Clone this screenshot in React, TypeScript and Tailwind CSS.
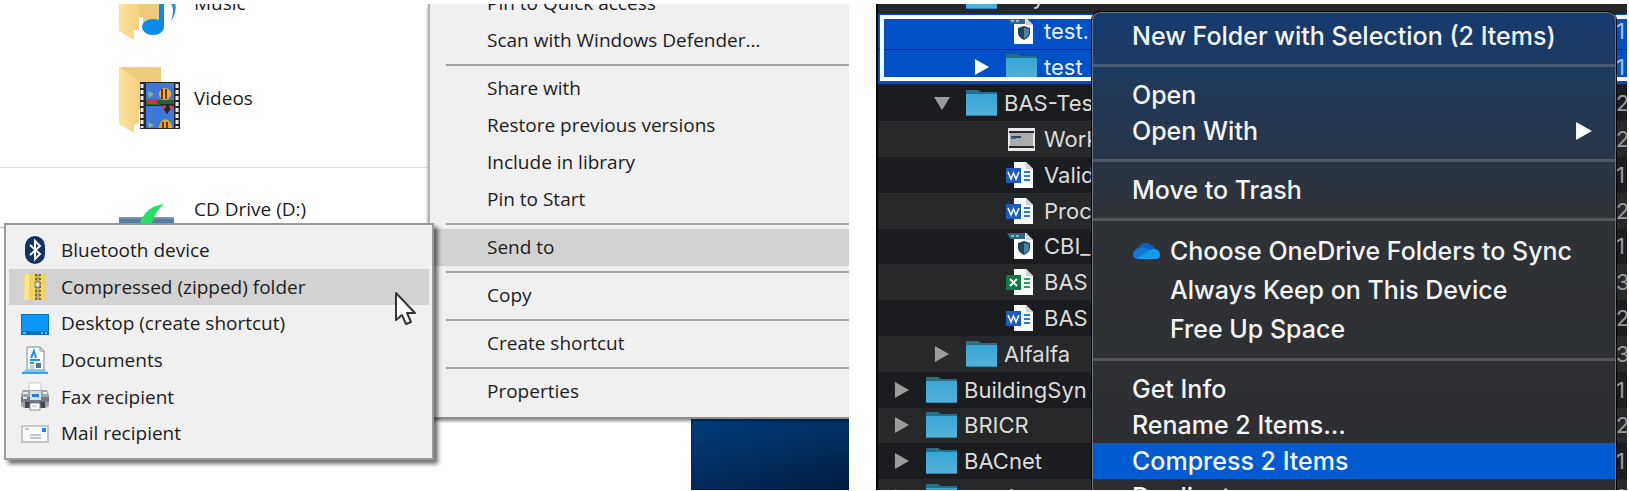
import type { ReactNode } from "react";

type IconProps = { className?: string };

const YellowFolder = ({ children }: { children: ReactNode }) => (
  <svg viewBox="0 0 64 68" className="h-[68px] w-16 shrink-0" aria-hidden="true">
    <defs>
      <linearGradient id="flap" x1="0" x2="1">
        <stop offset="0" stopColor="#fbe3a0" />
        <stop offset="1" stopColor="#f6d27e" />
      </linearGradient>
    </defs>
    <path d="M1 1h42v58H14z" fill="#eecb7c" />
    <path d="M15 60V44h10v18z" fill="#fff" />
    <path d="M1 1l20 14v42l-5 2v8L1 58z" fill="url(#flap)" />
    {children}
  </svg>
);

const MusicFolder = () => (
  <YellowFolder>
    <path d="M16 57h9v-3h20v8H16z" fill="#fff" />
    <ellipse cx="35" cy="54" rx="11" ry="8" fill="#0c8ce9" />
    <path d="M41 10h5v44h-5z" fill="#0c8ce9" />
    <path d="M52 20q11 14 1 28q5-13-3-22z" fill="#2d8fd6" />
  </YellowFolder>
);

const VideoFolder = () => (
  <YellowFolder>
    <path d="M22 16h40v47H22z" fill="#26282c" />
    <path d="M28 17h28v22H28zM28 40h28v22H28z" fill="#3f78d6" />
    <path d="M28 34h28v5H28z" fill="#20672f" />
    <path d="M24 18v44M59 18v44" stroke="#e8e8e8" strokeWidth="3" strokeDasharray="4 2" />
    <path d="M29 33h10v5H29z" fill="#d2344a" />
    <path d="M30 25l6 3-5 4z" fill="#8fb487" />
    <circle cx="47" cy="28" r="6" fill="#f0b51e" />
    <path d="M44 23v10M48 23v10" stroke="#76301c" strokeWidth="2" />
    <path d="M42 38l7 10 7-10z" fill="#25242f" />
    <circle cx="46" cy="41" r="2" fill="#d23b3b" />
    <circle cx="53" cy="41" r="2" fill="#d23b3b" />
    <path d="M41 62a6 8 0 0 1 13 0z" fill="#e8a81c" />
    <path d="M45 56v6M49 56v6" stroke="#76301c" strokeWidth="2" />
    <path d="M30 56l6 3-5 3z" fill="#8fb487" />
  </YellowFolder>
);

const CdDrive = () => (
  <svg viewBox="0 0 64 24" className="h-6 w-16 shrink-0" aria-hidden="true">
    <path d="M1 15h55v9H1z" fill="#5480a8" />
    <path d="M1 14h55v2H1z" fill="#7f95a5" />
    <path d="M21 24Q25 4 46 1q-7 6-11 15l-2 8z" fill="#25e06a" />
  </svg>
);

const BluetoothIcon = () => (
  <svg viewBox="0 0 28 28" className="size-7" aria-hidden="true">
    <rect x="4" y="0" width="20" height="28" rx="10" fill="#12315f" />
    <path d="M9 9l10 9-5 5V5l5 5-10 9" fill="none" stroke="#fff" strokeWidth="2" />
  </svg>
);

const ZipIcon = () => (
  <svg viewBox="0 0 28 28" className="size-7" aria-hidden="true">
    <path d="M4 1h21v23l1 3H3V3z" fill="#f5d35f" />
    <path d="M4 1h4v26H3z" fill="#fbe58f" />
    <path d="M14 1h5v26h-5z" fill="#c6ac55" />
    <path d="M15 1v26M19 1v26" stroke="#6d6a60" strokeWidth="2" strokeDasharray="2 2" />
    <path d="M14 9h5v5h-5z" fill="#e2e2e2" stroke="#77746a" />
  </svg>
);

const DesktopIcon = () => (
  <svg viewBox="0 0 28 28" className="size-7" aria-hidden="true">
    <path d="M0 4h28v21H0z" fill="#0a6fc0" />
    <path d="M1 5h26v16H1z" fill="#0c96f5" />
    <path d="M2 23h3M20 23h2M24 23h2" stroke="#dff1ff" strokeWidth="1" />
  </svg>
);

const DocumentsIcon = () => (
  <svg viewBox="0 0 28 28" className="size-7" aria-hidden="true">
    <path d="M6 1h13l4 4v19H6z" fill="#fbfcfd" stroke="#7f8b94" />
    <path d="M19 1v4h4" fill="none" stroke="#7f8b94" />
    <path d="M10 12l3-7 2 7M9 14h10M9 17h4" stroke="#1d95d8" strokeWidth="2" fill="none" />
    <path d="M15 17h5v5h-5z" fill="#4b7592" />
    <path d="M9 20h4M9 22h4" stroke="#8fa2b0" />
    <path d="M4 24h20l3 3H1z" fill="#7cc8ef" />
    <path d="M1 26h26v2H1z" fill="#3da3dd" />
  </svg>
);

const FaxIcon = () => (
  <svg viewBox="0 0 28 30" className="h-[30px] w-7" aria-hidden="true">
    <path d="M8 1h12v10H8z" fill="#fff" stroke="#c6c9cc" />
    <path d="M2 8h24l2 5v11l-3 2H3l-3-2V13z" fill="#a0a4ab" />
    <path d="M0 15h28v5H0z" fill="#747983" />
    <path d="M2 11h5M2 16h4M22 11h4" stroke="#e7e9ec" strokeWidth="2" />
    <path d="M9 9h11v9H9z" fill="#cfe0f2" />
    <path d="M11 12h7v3h-7z" fill="#2d7fd8" />
    <path d="M4 20h20v6H4z" fill="#44474e" />
    <path d="M9 21h10v7H9z" fill="#fff" stroke="#8d9298" />
    <path d="M11 24h5" stroke="#8eb6d9" />
  </svg>
);

const MailIcon = () => (
  <svg viewBox="0 0 28 28" className="size-7" aria-hidden="true">
    <path d="M1 6h26v16H1z" fill="#fafafa" stroke="#c3c6ca" strokeWidth="2" />
    <path d="M4 9h4M9 15h11M9 18h11" stroke="#8a95a1" />
    <path d="M21 8h4v4h-4z" fill="#2a84e4" />
  </svg>
);

const Pointer = () => (
  <svg viewBox="0 0 22 34" className="absolute top-[67px] left-[389px] h-[34px] w-[22px]" aria-hidden="true">
    <path
      d="M1 1v27l6-5 4 9 5-2-4-9h8z"
      fill="#fff"
      stroke="#35353b"
      strokeWidth="2"
      strokeLinejoin="round"
    />
  </svg>
);

const WinRow = ({ label, active }: { label: string; active?: boolean }) => (
  <li>
    <button
      type="button"
      className={
        active
          ? "block h-[37px] w-full bg-[#d2d2d2] pl-[57px] text-left whitespace-nowrap"
          : "block h-[37px] w-full pl-[57px] text-left whitespace-nowrap"
      }
    >
      {label}
    </button>
  </li>
);

const WinRule = () => (
  <li role="separator" className="mt-[5px] mb-1 ml-4 h-0.5 bg-[#a3a3a3]" />
);

const sendTo: { label: string; icon: ReactNode; active?: boolean }[] = [
  { label: "Bluetooth device", icon: <BluetoothIcon /> },
  { label: "Compressed (zipped) folder", icon: <ZipIcon />, active: true },
  { label: "Desktop (create shortcut)", icon: <DesktopIcon /> },
  { label: "Documents", icon: <DocumentsIcon /> },
  { label: "Fax recipient", icon: <FaxIcon /> },
  { label: "Mail recipient", icon: <MailIcon /> },
];

const WindowsPane = () => (
  <section
    aria-label="Windows Explorer"
    className="relative flex overflow-hidden bg-white font-['Open_Sans','Noto_Sans',sans-serif] text-[19px] leading-[37px] text-[#1c1c1c]"
  >
    <div className="w-[428px] shrink-0">
      <ul>
        <li className="-mt-9 flex h-[78px] items-center gap-3 pl-[118px]">
          <MusicFolder />
          <span className="pb-2">Music</span>
        </li>
        <li className="mt-[15px] flex h-[78px] items-center gap-3 pl-[118px]">
          <VideoFolder />
          <span className="pb-1">Videos</span>
        </li>
      </ul>
      <hr className="mt-7 border-[#dedede]" />
      <div className="mt-[23px] flex h-9 items-start gap-3 pl-[118px]">
        <div className="pt-3">
          <CdDrive />
        </div>
        <span>CD Drive (D:)</span>
      </div>
      <hr className="border-[#b5b5b5]" />
    </div>

    <div className="flex min-w-0 grow flex-col">
      <ul className="z-10 border-b-2 border-l-2 border-b-[#8e8e8e] border-l-[#b5b5b5] bg-[#f0f0f0] pb-[7px] shadow-[0_2px_3px_rgba(0,0,0,0.45)]">
        <li className="-mt-[19px]" />
        <WinRow label="Pin to Quick access" />
        <WinRow label="Scan with Windows Defender..." />
        <WinRule />
        <WinRow label="Share with" />
        <WinRow label="Restore previous versions" />
        <WinRow label="Include in library" />
        <WinRow label="Pin to Start" />
        <WinRule />
        <WinRow label="Send to" active />
        <WinRule />
        <WinRow label="Copy" />
        <WinRule />
        <WinRow label="Create shortcut" />
        <WinRule />
        <WinRow label="Properties" />
      </ul>
      <div className="ml-[263px] grow border-l border-[#1d2630] bg-linear-165 from-[#003f7e] via-[#002d5f] to-[#001d42]" />
    </div>

    <div className="absolute top-[219px] left-1 z-20 w-[430px] border-2 border-[#9a9a9a] bg-[#f0f0f0] pt-[7px] pb-1.5 shadow-[4px_4px_4px_rgba(0,0,0,0.55)]">
      <ul className="grid h-[220px] grid-rows-6 px-[3px]">
        {sendTo.map((item) => (
          <li key={item.label}>
            <button
              type="button"
              className={
                item.active
                  ? "flex h-full w-full items-center gap-3 bg-[#d2d2d2] pl-3 text-left"
                  : "flex h-full w-full items-center gap-3 pl-3 text-left"
              }
            >
              {item.icon}
              {item.label}
            </button>
          </li>
        ))}
      </ul>
      <Pointer />
    </div>
  </section>
);

const BlueFolder = () => (
  <svg viewBox="0 0 31 28" className="h-7 w-[31px] shrink-0" aria-hidden="true">
    <defs>
      <linearGradient id="folder" x1="0" y1="0" x2="0" y2="1">
        <stop offset="0" stopColor="#36a6d6" />
        <stop offset="1" stopColor="#55b2d8" />
      </linearGradient>
    </defs>
    <path d="M0 1h12l3 2h16v5H0z" fill="#2c6d86" />
    <path d="M0 5h31v22H0z" fill="url(#folder)" />
    <path d="M0 26h31v1H0z" fill="#2b87b0" />
  </svg>
);

const Page = ({ children }: { children: ReactNode }) => (
  <svg viewBox="0 0 31 28" className="h-7 w-[31px] shrink-0" aria-hidden="true">
    <path d="M8 1h12l7 7v19H8z" fill="#fafafa" />
    <path d="M20 1v7h7z" fill="#cfd3d6" />
    {children}
  </svg>
);

const WordIcon = () => (
  <Page>
    <path d="M18 11h6M18 15h6M18 19h6" stroke="#2b7cd3" strokeWidth="2" />
    <path d="M0 7h15v15H0z" fill="#1b5cbe" />
    <path d="M2 11l3 7 2.500-6 2.500 6 3-7" fill="none" stroke="#fff" strokeWidth="1.5" />
  </Page>
);

const ExcelIcon = () => (
  <Page>
    <path d="M18 11h6M18 15h6M18 19h6" stroke="#21a366" strokeWidth="2" />
    <path d="M0 7h15v15H0z" fill="#107c41" />
    <path d="M4 11l7 7M11 11l-7 7" fill="none" stroke="#fff" strokeWidth="1.8" />
  </Page>
);

const ArchiveIcon = () => (
  <Page>
    <path d="M1 1h18v6H4z" fill="#2f6684" />
    <path d="M5 4h3M10 4h3" stroke="#8fb9cc" strokeWidth="2" />
    <path d="M12 11l6-2 6 2v5q0 4-6 7-6-3-6-7z" fill="#22455c" />
    <path d="M18 11l5 1v4q0 3-5 6z" fill="#4d83a3" />
  </Page>
);

const WindowIcon = () => (
  <svg viewBox="0 0 31 28" className="h-7 w-[31px] shrink-0" aria-hidden="true">
    <path d="M2 3h27v23H2z" fill="#e8e8e8" />
    <path d="M3 6h25v2H3zM3 21h25v2H3z" fill="#26282a" />
    <path d="M4 8h23v13H4z" fill="#a9abac" />
    <path d="M5 11h10v2H5z" fill="#3a4048" />
    <path d="M5 13h5" stroke="#2c64ae" strokeWidth="2" />
  </svg>
);

const Disclosure = ({ open, className }: { open?: boolean } & IconProps) => (
  <svg viewBox="0 0 17 17" className={className} fill="currentColor" aria-hidden="true">
    {open ? <path d="M0 2h17L8.500 16z" /> : <path d="M1 0l15 8.500L1 17z" />}
  </svg>
);

type FileRow = {
  name: string;
  level: 0 | 1 | 2;
  icon: ReactNode;
  size: string;
  arrow?: "open" | "closed";
  selected?: boolean;
};

const files: FileRow[] = [
  { name: "BSync", level: 1, icon: <BlueFolder />, size: "2" },
  { name: "test.", level: 2, icon: <ArchiveIcon />, size: "1", selected: true },
  { name: "test", level: 2, icon: <BlueFolder />, size: "1", arrow: "closed", selected: true },
  { name: "BAS-Tes", level: 1, icon: <BlueFolder />, size: "2", arrow: "open" },
  { name: "Work", level: 2, icon: <WindowIcon />, size: "2" },
  { name: "Valid", level: 2, icon: <WordIcon />, size: "1" },
  { name: "Proc", level: 2, icon: <WordIcon />, size: "2" },
  { name: "CBI_", level: 2, icon: <ArchiveIcon />, size: "1" },
  { name: "BAS", level: 2, icon: <ExcelIcon />, size: "3" },
  { name: "BAS", level: 2, icon: <WordIcon />, size: "2" },
  { name: "Alfalfa", level: 1, icon: <BlueFolder />, size: "3", arrow: "closed" },
  { name: "BuildingSyn", level: 0, icon: <BlueFolder />, size: "1", arrow: "closed" },
  { name: "BRICR", level: 0, icon: <BlueFolder />, size: "2", arrow: "closed" },
  { name: "BACnet", level: 0, icon: <BlueFolder />, size: "1", arrow: "closed" },
  { name: "catalog", level: 0, icon: <BlueFolder />, size: "1", arrow: "closed" },
];

const indent = ["pl-4", "pl-14", "pl-24"];

const FinderRow = ({ file, striped }: { file: FileRow; striped: boolean }) => {
  const tone = file.selected
    ? "bg-[#0050c8] text-[#e6eeff] border-b border-[#10254a]"
    : striped
      ? "bg-[#262829] text-[#dcdcdc]"
      : "bg-[#1b1c20] text-[#dcdcdc]";
  return (
    <li className={`flex min-h-0 items-center overflow-hidden ${tone}`}>
      <div className={`flex grow items-center ${indent[file.level]}`}>
        <span className={file.selected ? "w-8 text-white" : "w-8 text-[#9b9b9b]"}>
          {file.arrow && <Disclosure open={file.arrow === "open"} className="size-4" />}
        </span>
        {file.icon}
        <span className="pl-[7px]">{file.name}</span>
      </div>
      <span className={file.selected ? "w-[11px] text-[#a9c0ee]" : "w-[11px] text-[#97999b]"}>
        {file.size}
      </span>
    </li>
  );
};

const MacRow = ({
  label,
  kind = "plain",
  children,
}: {
  label: string;
  kind?: "plain" | "active" | "inset";
  children?: ReactNode;
}) => {
  const styles = {
    plain: "flex h-9 w-full items-center pr-[22px] pl-[39px] text-left whitespace-nowrap",
    active: "flex h-9 w-full items-center bg-[#005bd0] pr-[22px] pl-[39px] text-left whitespace-nowrap",
    inset: "relative flex h-[39px] w-full items-center pr-[22px] pl-[77px] text-left whitespace-nowrap",
  };
  return (
    <li>
      <button type="button" className={styles[kind]}>
        <span className="grow">{label}</span>
        {children}
      </button>
    </li>
  );
};

const MacRule = () => <li role="separator" className="my-2.5 h-[3px] bg-white/18" />;

const OneDriveIcon = () => (
  <svg viewBox="0 0 27 18" className="absolute left-10 h-[18px] w-[27px]" aria-hidden="true">
    <path d="M4 13A8 8 0 0 1 6 4Q13-3 20 4l3 4-8 6z" fill="#0a5fb8" />
    <path d="M6 6q5-2 9 1l8 5-12 5H5Q0 17 0 12q1-5 6-6z" fill="#0f78d4" />
    <path d="M4 16l12-7q3-3 6-2 5 1 5 6 0 4-4 4H7z" fill="#1499e8" />
  </svg>
);

const MacPane = () => (
  <section
    aria-label="Finder"
    className="relative overflow-hidden border-l-2 border-black bg-[#1b1c20] font-[Inter,'Liberation_Sans',sans-serif] text-[22px] leading-7"
  >
    <ul className="-mt-[26px] grid h-[537px] grid-rows-15">
      {files.map((file, i) => (
        <FinderRow key={i} file={file} striped={i % 2 === 0} />
      ))}
    </ul>
    <div className="absolute top-[11px] right-0 left-0.5 h-[66px] border-4 border-r-0 border-white" />

    <ul className="absolute top-2 right-[11px] left-[214px] rounded-t-lg border border-b-0 border-[#6d7680] bg-linear-to-b from-[#143b70] via-[#2f3236] via-40% to-[#2c2d2f] pt-[5px] text-[25px] leading-9 font-medium text-[#f4f6f8] outline outline-black">
      <MacRow label="New Folder with Selection (2 Items)" />
      <MacRule />
      <MacRow label="Open" />
      <MacRow label="Open With">
        <Disclosure className="size-[18px] text-white" />
      </MacRow>
      <MacRule />
      <MacRow label="Move to Trash" />
      <MacRule />
      <MacRow label="Choose OneDrive Folders to Sync" kind="inset">
        <OneDriveIcon />
      </MacRow>
      <MacRow label="Always Keep on This Device" kind="inset" />
      <MacRow label="Free Up Space" kind="inset" />
      <MacRule />
      <MacRow label="Get Info" />
      <MacRow label="Rename 2 Items..." />
      <MacRow label="Compress 2 Items" kind="active" />
      <MacRow label="Duplicate" />
    </ul>
  </section>
);

export default function App() {
  return (
    <main className="grid h-screen grid-cols-[849fr_751fr] grid-rows-1 gap-[27px] bg-white pt-1 pr-0.5 pb-px">
      <WindowsPane />
      <MacPane />
    </main>
  );
}
